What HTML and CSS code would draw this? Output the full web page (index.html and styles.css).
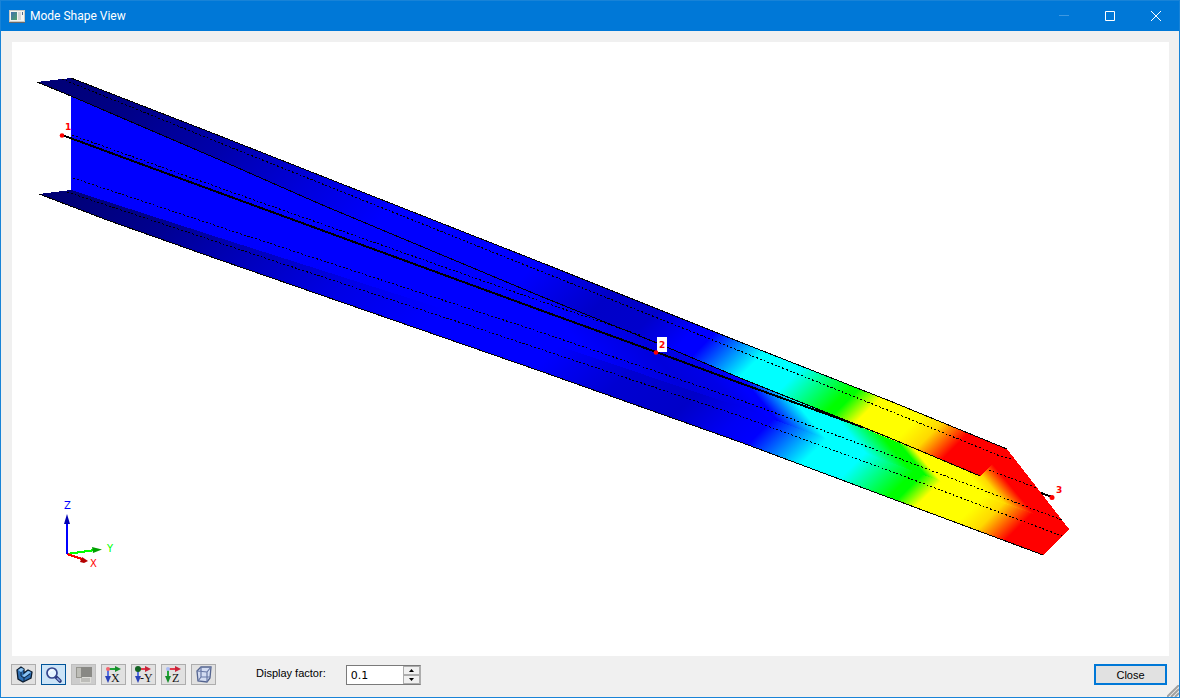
FILE: index.html
```html
<!DOCTYPE html>
<html lang="en">
<head>
<meta charset="utf-8">
<title>Mode Shape View</title>
<link rel="stylesheet" href="styles.css">
</head>
<body>
<main class="window">
  <header class="titlebar">
    <svg class="app-icon" viewBox="0 0 16 14" aria-hidden="true">
      <defs><linearGradient id="appg" x1="0" y1="0" x2="1" y2="1"><stop offset="0" stop-color="#3f6fae"/><stop offset="1" stop-color="#4fa06a"/></linearGradient></defs>
      <rect x="0.5" y="1.5" width="15" height="11" fill="#f4f4f0" stroke="#c9c9c4"/>
      <rect x="2" y="3" width="6" height="8" fill="url(#appg)"/>
      <rect x="9" y="3" width="3" height="8" fill="#d4d6d8"/>
      <rect x="13" y="3" width="1" height="3" fill="#58708c"/>
      <path d="M0 13.500H16" stroke="#6a6a6a"/>
    </svg>
    <h1 class="title">Mode Shape View</h1>
    <div class="caption-buttons">
      <button class="caption minimize" type="button" aria-label="Minimize" disabled><svg viewBox="0 0 10 10"><path d="M0 4.500H10"/></svg></button>
      <button class="caption" type="button" aria-label="Maximize"><svg viewBox="0 0 10 10"><path d="M.5.5h9v9h-9z"/></svg></button>
      <button class="caption" type="button" aria-label="Close window"><svg viewBox="0 0 10 10"><path d="M0 0L10 10M10 0L0 10"/></svg></button>
    </div>
  </header>
  <div class="content">
    <svg class="view" viewBox="12 42 1157 614" role="img" aria-label="Mode shape of beam">
      <defs>
        <linearGradient id="top" gradientUnits="userSpaceOnUse" x1="0" y1="0" x2="800" y2="800">
          <stop offset=".075" stop-color="#000074"/><stop offset=".15" stop-color="#000088"/>
          <stop offset=".23" stop-color="#0000ac"/><stop offset=".315" stop-color="#0000e0"/>
          <stop offset=".375" stop-color="#00f"/><stop offset=".5" stop-color="#00f"/>
          <stop offset=".565" stop-color="#0000c8"/><stop offset=".605" stop-color="#0000cc"/>
          <stop offset=".64" stop-color="#00f"/><stop offset=".655" stop-color="#00f"/>
          <stop offset=".698" stop-color="#0ff"/><stop offset=".731" stop-color="#0ff"/>
          <stop offset=".774" stop-color="#0f0"/><stop offset=".78" stop-color="#0f0"/>
          <stop offset=".799" stop-color="#ff0"/><stop offset=".835" stop-color="#ff0"/>
          <stop offset=".853" stop-color="#ffd800"/><stop offset=".876" stop-color="#f00"/>
        </linearGradient>
        <linearGradient id="bottom" gradientUnits="userSpaceOnUse" x1="0" y1="0" x2="800" y2="800">
          <stop offset=".15" stop-color="#000074"/><stop offset=".234" stop-color="#00008c"/>
          <stop offset=".294" stop-color="#0000b0"/><stop offset=".394" stop-color="#0000e6"/>
          <stop offset=".469" stop-color="#00f"/><stop offset=".565" stop-color="#00f"/>
          <stop offset=".625" stop-color="#0000d2"/><stop offset=".681" stop-color="#0000c8"/>
          <stop offset=".722" stop-color="#0000f4"/><stop offset=".745" stop-color="#00f"/>
          <stop offset=".791" stop-color="#0ff"/><stop offset=".824" stop-color="#0ff"/>
          <stop offset=".866" stop-color="#0f0"/><stop offset=".873" stop-color="#0f0"/>
          <stop offset=".889" stop-color="#ff0"/><stop offset=".925" stop-color="#ff0"/>
          <stop offset=".942" stop-color="#ffd800"/><stop offset=".966" stop-color="#f00"/>
        </linearGradient>
        <linearGradient id="web" gradientUnits="userSpaceOnUse" x1="0" y1="0" x2="360" y2="-300">
          <stop offset=".48" stop-color="#00f"/><stop offset=".59" stop-color="#0000dc"/>
          <stop offset=".65" stop-color="#0000e8"/><stop offset=".69" stop-color="#00f"/>
          <stop offset=".7" stop-color="#00f"/><stop offset=".755" stop-color="#0ff"/>
          <stop offset=".8" stop-color="#0ff"/><stop offset=".85" stop-color="#0f0"/>
          <stop offset=".868" stop-color="#0f0"/><stop offset=".885" stop-color="#ff0"/>
          <stop offset=".94" stop-color="#ff0"/><stop offset=".96" stop-color="#ffd800"/>
          <stop offset=".993" stop-color="#f00"/>
        </linearGradient>
      </defs>
      <g shape-rendering="crispEdges">
        <path fill="url(#web)" d="M71 90L200 140L657 343L980 470L1007 449L1069 529L1028 520L829 450L550 350L71 195z"/>
        <path fill="url(#bottom)" d="M39 194L71 190L220 238L550 343L740 407L829 440L935 479L1028 512L1069 529L1043 555L890 498L740 442L540 371L220 260L107 220z"/>
        <path fill="url(#top)" d="M37 82L71 78L220 136L550 266L740 342L890 401L1007 449L980 476L890 439L740 378L657 343L540 296L320 204L220 160L71 96z"/>
        <g fill="none" stroke="#000">
          <path d="M71 78L220 136L550 266L740 342L890 401L1007 449"/>
          <path d="M37 82L71 96L220 160L320 204L540 296L657 343L740 378L890 438L980 476"/>
          <path d="M39 194L107 220L220 260L540 371L740 442L890 498L1043 555"/>
          <path stroke-width="2" d="M62 135L220 193L540 310L656 352L740 383L832 416L862 427M1041 493L1052 497"/>
          <g stroke-dasharray="2 2">
            <path d="M62 79L220 143L550 275L740 351L890 411L1000 456L1013 459"/>
            <path d="M72 135L220 188L540 301L640 335M989 470L1037 488"/>
            <path d="M73 178L220 227L540 332L740 400L890 455L1062 520"/>
            <path d="M67 192L220 243L540 349L740 416L890 471L1062 536"/>
          </g>
        </g>
        <path fill="#fff" d="M657 337h10v15h-10z"/>
      </g>
      <g fill="#f00">
        <circle cx="62" cy="135.500" r="2.300"/><circle cx="656" cy="352.500" r="2.300"/><circle cx="1052" cy="497.500" r="2.500"/>
      </g>
      <g class="node-label">
        <text x="65" y="130">1</text><text x="659" y="348">2</text><text x="1056" y="493">3</text>
      </g>
      <g fill="none" stroke-width="2" shape-rendering="crispEdges">
        <path stroke="#0f0" d="M67 554L95 550"/><path stroke="#f00" d="M67 554L82 559"/><path stroke="#00f" d="M67 554V522"/>
      </g>
      <path fill="#0000b4" d="M67 514L70 524H64z"/><path fill="#00a000" d="M102 549.500L92 547L93 553z"/><path fill="#b40000" d="M88 561L82 557L80 562L84 563z"/>
      <g class="axis-label">
        <text x="64" y="509" fill="#00f">Z</text><text x="107" y="552" fill="#0f0">Y</text><text x="90" y="567" fill="#f00">X</text>
      </g>
    </svg>
  </div>
  <footer class="controls">
    <div class="tools">
      <button class="tool" type="button" aria-label="Solid view"><svg viewBox="0 0 18 18"><path d="M2 4L6 1L9 3V7L13 4L17 6L16 12L8 16L3 13z" fill="#2f70b4" stroke="#0b1c30" stroke-width="1.300"/><path d="M3 4L6 2L9 3L6 6zM7 10L13 5L16 6L10 11z" fill="#8cc4f2"/><path d="M6 6V10L9 12V15M9 12L15 8" fill="none" stroke="#102843"/></svg></button>
      <button class="tool pressed" type="button" aria-label="Zoom" aria-pressed="true"><svg viewBox="0 0 18 18"><path d="M11 11L15 15" stroke="#28387c" stroke-width="3.600" stroke-linecap="round"/><path d="M12 12L15 15" stroke="#8ba2df" stroke-width="1.500"/><circle cx="7" cy="7" r="5" fill="#e4f3ff" stroke="#34458d" stroke-width="1.700"/><path d="M4 7Q5 4 8 4" fill="none" stroke="#fff"/></svg></button>
      <button class="tool disabled" type="button" aria-label="Previous view" disabled><svg viewBox="0 0 18 18" shape-rendering="crispEdges"><path d="M5.500 11.500h10v5h-10z" fill="#bdbdb9" stroke="#dededa"/><path d="M1.500 1.500h5v10h-5z" fill="#bdbdb7" stroke="#96968f"/><path d="M6 1h11v10H6z" fill="#898985"/></svg></button>
      <button class="tool" type="button" aria-label="View along X"><svg viewBox="0 0 18 18"><path d="M3 3H11" stroke="#20a536" stroke-width="2"/><path d="M10 0L16 3L10 6z" fill="#168e2a"/><path d="M3 4V12" stroke="#5870df" stroke-width="2"/><path d="M0 10H6L3 17z" fill="#2942ba"/><circle cx="3" cy="3" r="2" fill="#f26570"/><text class="glyph" x="6" y="16">X</text></svg></button>
      <button class="tool" type="button" aria-label="View along negative Y"><svg viewBox="0 0 18 18"><path d="M3 3H11" stroke="#e33b4d" stroke-width="2"/><path d="M10 0L16 3L10 6z" fill="#ca2339"/><path d="M3 4V12" stroke="#5870df" stroke-width="2"/><path d="M0 10H6L3 17z" fill="#2942ba"/><circle cx="3" cy="3" r="3" fill="#126323"/><text class="glyph" x="5" y="16">-Y</text></svg></button>
      <button class="tool" type="button" aria-label="View along Z"><svg viewBox="0 0 18 18"><path d="M3 3H11" stroke="#e33b4d" stroke-width="2"/><path d="M10 0L16 3L10 6z" fill="#ca2339"/><path d="M3 4V12" stroke="#20a536" stroke-width="2"/><path d="M0 10H6L3 17z" fill="#168e2a"/><circle cx="3" cy="3" r="2" fill="#a9bcf5"/><text class="glyph" x="7" y="16">Z</text></svg></button>
      <button class="tool" type="button" aria-label="Perspective view"><svg viewBox="0 0 18 18"><path d="M2 5L6 1H16L15 12L12 16L3 15z" fill="#d3dcf2" stroke="#54648f" stroke-width="1.300"/><path d="M2 5L12 6V16M12 6L16 1M6 1V11H15M6 11L3 15" fill="none" stroke="#6878a5" stroke-width="1.200"/></svg></button>
    </div>
    <label class="factor-label" for="factor">Display factor:</label>
    <div class="spinner">
      <input id="factor" type="text" inputmode="decimal" value="0.1">
      <div class="steps">
        <button type="button" aria-label="Increase"><svg viewBox="0 0 5 3"><path d="M0 3L2.500 0L5 3z"/></svg></button>
        <button type="button" aria-label="Decrease"><svg viewBox="0 0 5 3"><path d="M0 0L2.500 3L5 0z"/></svg></button>
      </div>
    </div>
    <button class="close" type="button">Close</button>
    <svg class="grip" viewBox="0 0 12 12" aria-hidden="true"><path d="M0 12L12 0M4 12L12 4M8 12L12 8"/></svg>
  </footer>
</main>
</body>
</html>
```
FILE: styles.css
```css
* { box-sizing: border-box; }
body { margin: 0; font-family: "Liberation Sans", Arial, sans-serif; font-size: 11px; color: #000; }
button { padding: 0; font: inherit; color: inherit; }
.window { display: flex; flex-direction: column; height: 100vh; border: 1px solid #1883d7; background: #f0f0f0; }
.titlebar { display: flex; align-items: center; height: 30px; flex: none; padding-left: 8px; background: #0078d7; color: #fff; }
.app-icon { width: 16px; height: 14px; }
.title { margin: 0 0 0 5px; font: 400 12px/16px Roboto, "Open Sans", sans-serif; }
.caption-buttons { display: flex; margin-left: auto; height: 100%; }
.caption { display: grid; place-items: center; width: 46px; border: 0; background: none; }
.caption svg { width: 10px; height: 10px; fill: none; stroke: #fff; }
.minimize svg { stroke: #3d98e1; }
.content { flex: 1; min-height: 0; margin: 11px 10px 0 11px; background: #fff; }
.view { display: block; width: 100%; height: 100%; }
.node-label { font: bold 9px "DejaVu Sans", sans-serif; fill: #f00; }
.axis-label { font: 10px "DejaVu Sans", sans-serif; }
.controls { position: relative; display: flex; align-items: flex-start; flex: none; height: 41px; padding: 8px 12px 0 10px; }
.tools { display: flex; gap: 5px; }
.tool { display: flex; align-items: center; width: 25px; height: 21px; padding-left: 3px; border: 1px solid #adadad; background: #e1e1e1; }
.tool svg { flex: none; width: 18px; height: 18px; }
.tool.pressed { border-color: #005499; background: #cce4f7; }
.tool.disabled { border-color: #bfbfbf; background: #ccc; }
.glyph { font: 12px "Liberation Serif", serif; fill: #111; }
.factor-label { margin-left: 40px; line-height: 18px; }
.spinner { display: flex; width: 75px; height: 20px; margin: 1px 0 0 20px; border: 1px solid #7a7a7a; border-right-color: #adadad; background: #fff; }
.spinner input { flex: 1; min-width: 0; padding: 0 0 0 4px; border: 0; outline: 0; background: none; font: 11px "DejaVu Sans", sans-serif; }
.steps { display: flex; flex-direction: column; width: 17px; }
.steps button { display: grid; place-items: center; flex: 1; min-height: 0; border: 1px solid #adadad; background: #f0f0f0; }
.steps svg { width: 5px; height: 3px; }
.close { width: 73px; height: 21px; margin-left: auto; border: 2px solid #0078d7; background: #e1e1e1; }
.grip { position: absolute; right: 0; bottom: 0; width: 12px; height: 12px; fill: none; stroke: #a0a0a0; stroke-width: 2; }
```
